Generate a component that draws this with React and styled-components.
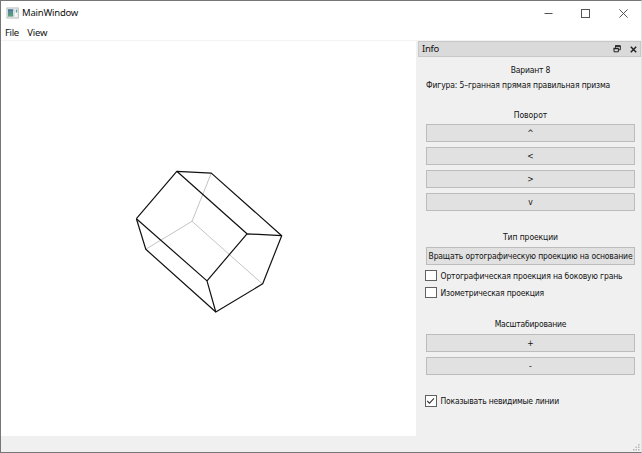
import React, { useState } from 'react';
import styled, { createGlobalStyle } from 'styled-components';

const GlobalStyle = createGlobalStyle`
  * { box-sizing: border-box; }
  body { margin: 0; overflow: hidden; background: #fff; }
`;

const Window = styled.div`
  width: 642px;
  height: 453px;
  display: flex;
  flex-direction: column;
  background: #fff;
  border: 1px solid #767676;
  border-right-color: #e2e2e2;
  color: #111;
  font: 9.5px/12px "Noto Sans", "Open Sans", sans-serif;
`;

const TitleBar = styled.header`
  height: 24px;
  flex: none;
  display: flex;
  align-items: center;
  padding-left: 5px;
`;

const Title = styled.div`
  flex: 1;
  margin-left: 3px;
  letter-spacing: -0.22px;
`;

const WindowControls = styled.div`
  display: flex;
  margin-right: -1px;
`;

const WindowButton = styled.button`
  width: 37.5px;
  height: 22px;
  padding: 0;
  border: 0;
  background: none;
  display: flex;
  align-items: center;
  justify-content: center;
`;

const MenuBar = styled.nav`
  height: 16px;
  flex: none;
  display: flex;
  gap: 8.5px;
  padding: 2px 0 0 4px;
  border-bottom: 1px solid #f3f3f3;
`;

const MenuItem = styled.span`
  letter-spacing: ${(p) => p.$spacing}px;
`;

const Body = styled.main`
  height: 395px;
  flex: none;
  display: flex;
`;

const Canvas = styled.section`
  width: 415px;
  flex: none;
  background: #fff;
`;

const Dock = styled.aside`
  flex: 1;
  padding-left: 2px;
  background: #f0f0f0;
`;

const DockTitle = styled.div`
  height: 16px;
  display: flex;
  align-items: center;
  padding: 0 4px 0 3px;
  background: #dadada;
  border: 1px solid #c8c8c8;
  letter-spacing: -0.25px;
`;

const DockName = styled.span`
  flex: 1;
`;

const DockIcons = styled.div`
  display: flex;
  align-items: center;
  gap: 9px;
  margin-right: -1px;
`;

const Panel = styled.div`
  display: flex;
  flex-direction: column;
  padding: 7px 6px 0 8px;
  font-family: "DejaVu Sans Condensed", "DejaVu Sans", sans-serif;
  font-stretch: condensed;
  font-size: 8.5px;
`;

const Label = styled.div`
  height: 12px;
  margin-top: ${(p) => p.$top || 0}px;
  line-height: 12px;
  text-align: ${(p) => (p.$left ? 'left' : 'center')};
  white-space: nowrap;
  letter-spacing: ${(p) => p.$spacing}px;
`;

const ButtonStack = styled.div`
  display: flex;
  flex-direction: column;
  gap: 5px;
  margin-top: ${(p) => p.$top}px;
`;

const PushButton = styled.button`
  height: 18px;
  padding: 0;
  background: #e1e1e1;
  border: 1px solid #bcbcbc;
  color: inherit;
  font: inherit;
  line-height: 16px;
  white-space: nowrap;
  letter-spacing: ${(p) => p.$spacing || 0}px;
`;

const CheckRow = styled.label`
  height: 12px;
  margin-top: ${(p) => p.$top}px;
  margin-left: -1px;
  display: flex;
  align-items: center;
  gap: 4px;
  white-space: nowrap;
  letter-spacing: ${(p) => p.$spacing}px;
`;

const HiddenInput = styled.input`
  appearance: none;
  width: 0;
  height: 0;
  margin: 0 -4px 0 0;
`;

const Box = styled.span`
  width: 11.5px;
  height: 11.5px;
  display: flex;
  border: 1px solid #606060;
  background: #fff;
`;

const StatusBar = styled.footer`
  flex: 1;
  display: flex;
  align-items: flex-end;
  justify-content: flex-end;
  background: #f0f0f0;
`;

function AppIcon() {
  return (
    <svg width="13" height="12" viewBox="0 0 13 12">
      <rect x="1" y="1" width="11.3" height="10" fill="#f7f7f7" stroke="#b4b9bb" />
      <rect x="2" y="2.4" width="5.2" height="7" fill="#5a8f92" />
      <path d="M2 2.4h5.2v1.8H2z" fill="#4778a0" />
      <path d="M2 7.5h5.2v1.9H2z" fill="#5a9f78" />
      <rect x="9.8" y="2.5" width="1.4" height="3" fill="#59a29a" />
      <path d="M8.3 2v8" stroke="#d5dada" />
    </svg>
  );
}

function Prism() {
  return (
    <svg width="415" height="395" viewBox="1 41 415 395" fill="none">
      <path d="M211.3 173 192 221.3 145.7 249.3M192 221.3 262.5 284" stroke="#bdbdbd" strokeWidth=".9" />
      <g stroke="#111" strokeWidth="1.2" strokeLinejoin="round">
        <path d="M136.4 218.7 145.8 249.3 215.8 312" />
        <path d="M136.4 218.7 176.8 171.3 211.3 173.1 281.7 235.7" />
        <path d="M281.7 235.7 262.7 283.8 215.8 312 207 280.9 247 233.8Z" />
        <path d="M176.8 171.3 247 233.8M136.4 218.7 207 280.9" />
      </g>
    </svg>
  );
}

function Check({ label, top, spacing, initial = false }) {
  const [on, setOn] = useState(initial);
  return (
    <CheckRow $top={top} $spacing={spacing}>
      <HiddenInput type="checkbox" checked={on} onChange={() => setOn(!on)} />
      <Box>
        {on && (
          <svg width="10" height="10" viewBox="0 0 10 10" fill="none">
            <path d="M1.3 5 3.7 7.3 8.4 2.2" stroke="#333" strokeWidth="1.1" />
          </svg>
        )}
      </Box>
      {label}
    </CheckRow>
  );
}

export default function App() {
  return (
    <>
      <GlobalStyle />
      <Window>
        <TitleBar>
          <AppIcon />
          <Title>MainWindow</Title>
          <WindowControls>
            <WindowButton aria-label="Minimize">
              <svg width="9" height="9"><path d="M.5 4.5h8" stroke="#555" /></svg>
            </WindowButton>
            <WindowButton aria-label="Maximize">
              <svg width="9" height="9"><rect x=".5" y=".5" width="8" height="8" fill="none" stroke="#555" /></svg>
            </WindowButton>
            <WindowButton aria-label="Close">
              <svg width="9" height="9"><path d="m.4.4 8.2 8.2m0-8.2L.4 8.6" stroke="#444" strokeWidth=".9" /></svg>
            </WindowButton>
          </WindowControls>
        </TitleBar>
        <MenuBar>
          <MenuItem $spacing={-0.35}>File</MenuItem>
          <MenuItem $spacing={-0.2}>View</MenuItem>
        </MenuBar>
        <Body>
          <Canvas>
            <Prism />
          </Canvas>
          <Dock>
            <DockTitle>
              <DockName>Info</DockName>
              <DockIcons>
                <svg width="8" height="8" fill="none" stroke="#222">
                  <path d="M2.5 2.8V1h4.8v3.8H6" />
                  <path d="M2 1h5.5M.6 3.4h5" strokeWidth="1.5" />
                  <path d="M1 3.4v3.4h4.4V3.4" />
                </svg>
                <svg width="7" height="7"><path d="m.8.8 5.4 5.4m0-5.4L.8 6.2" stroke="#222" strokeWidth="1.5" /></svg>
              </DockIcons>
            </DockTitle>
            <Panel>
              <Label $spacing={-0.19}>Вариант 8</Label>
              <Label $top={3} $left $spacing={-0.14}>Фигура: 5–гранная прямая правильная призма</Label>
              <Label $top={18} $spacing={0}>Поворот</Label>
              <ButtonStack $top={3}>
                <PushButton>^</PushButton>
                <PushButton>&lt;</PushButton>
                <PushButton>&gt;</PushButton>
                <PushButton>v</PushButton>
              </ButtonStack>
              <Label $top={20} $spacing={-0.09}>Тип проекции</Label>
              <ButtonStack $top={4}>
                <PushButton $spacing={-0.15}>Вращать ортографическую проекцию на основание</PushButton>
              </ButtonStack>
              <Check top={4.5} spacing={-0.14} label="Ортографическая проекция на боковую грань" />
              <Check top={5} spacing={-0.18} label="Изометрическая проекция" />
              <Label $top={19.5} $spacing={-0.21}>Масштабирование</Label>
              <ButtonStack $top={4}>
                <PushButton>+</PushButton>
                <PushButton>-</PushButton>
              </ButtonStack>
              <Check top={20} spacing={-0.2} initial label="Показывать невидимые линии" />
            </Panel>
          </Dock>
        </Body>
        <StatusBar>
          <svg width="8" height="8" fill="#b8b8b8">
            <path d="M5 0h1.5v1.5H5zM2.5 2.5H4V4H2.5zM5 2.5h1.5V4H5zM0 5h1.5v1.5H0zM2.5 5H4v1.5H2.5zM5 5h1.5v1.5H5z" />
          </svg>
        </StatusBar>
      </Window>
    </>
  );
}
